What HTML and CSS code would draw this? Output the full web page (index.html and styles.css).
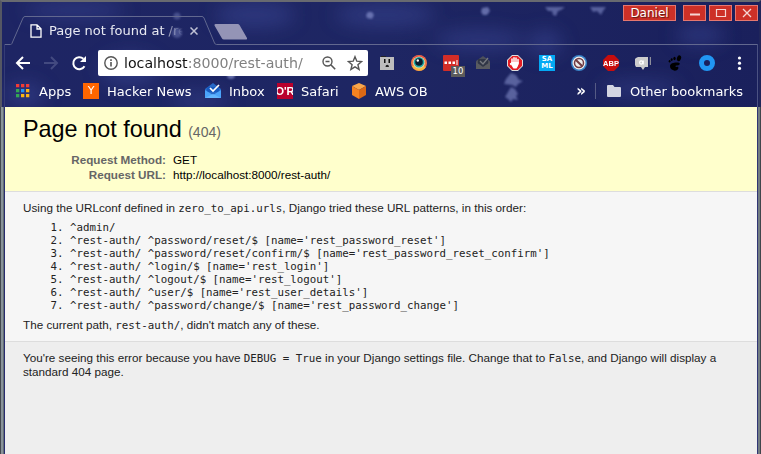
FILE: index.html
```html
<!DOCTYPE html>
<html lang="en">
<head>
<meta charset="utf-8">
<title>Page not found at /rest-auth/</title>
<link rel="stylesheet" href="styles.css">
</head>
<body>
<div class="window">
<header class="chrome">
<svg class="theme" width="761" height="107" viewBox="0 0 761 107" aria-hidden="true">
<defs>
<filter id="soft" x="-50%" y="-50%" width="200%" height="200%"><feGaussianBlur stdDeviation="9"/></filter>
<filter id="fuzz" x="-50%" y="-50%" width="200%" height="200%"><feGaussianBlur stdDeviation=".8"/></filter>
<linearGradient id="fade"><stop offset="0" stop-color="#1e2564"/><stop offset=".5" stop-color="#1e2663"/><stop offset="1" stop-color="#1a205c"/></linearGradient>
</defs>
<rect width="761" height="107" fill="url(#fade)"/>
<g filter="url(#soft)" fill="#35418a" opacity=".65"><ellipse cx="75" cy="10" rx="50" ry="9"/><ellipse cx="130" cy="70" rx="30" ry="16"/><ellipse cx="255" cy="15" rx="40" ry="13"/><ellipse cx="385" cy="15" rx="50" ry="12"/><ellipse cx="545" cy="43" rx="17" ry="13"/><ellipse cx="480" cy="40" rx="45" ry="10"/><ellipse cx="640" cy="88" rx="40" ry="7"/><ellipse cx="25" cy="95" rx="20" ry="12"/><ellipse cx="200" cy="100" rx="30" ry="8"/><ellipse cx="700" cy="35" rx="25" ry="10"/></g>
<g filter="url(#fuzz)" fill="#8b95d0" opacity=".65">
<circle cx="177" cy="33" r="5" opacity=".6"/><circle cx="177" cy="16" r="3.500" opacity=".6"/><path d="M368 12l4 0 2 3-2 4-5-1-1-3zM482 8l6-1 2 4-3 4-4 0-2-3z"/><path d="M545 7h20l-4 3-3 1-2 5-3-1-1-4-4 0zM590 7h16l-3 4-2 4-4-4-4 1zM511 73l5 2 3 5 4 1-5 3-2 3-4-2-8-1 2-5zM511 87l4 2 3 5-2 2 2 4-5-1-2 3-3-3-3-2 3-5z" opacity=".85"/><circle cx="231" cy="75" r="4"/></g>
<path d="M5 44.500h5.500q1 0 1.400-1L23 18q.6-1.500 2-1.500h177q1.400 0 2 1.500l10.500 25q.7 1.500 2 1.500H758" fill="none" stroke="#62688f"/>
<path d="M215.500 24h22q1.500 0 2 1l7.500 13q.5 1.500-1 1.500h-22q-1.500 0-2-1l-7.500-13q-.500-1.500 1-1.500z" fill="#9494b6"/>
</svg>
<div class="titlebar">
<div class="tab">
<svg class="file" width="12" height="14" viewBox="0 0 12 14"><path d="M1 .8h6l4 4v8.400H1zM7 .8v4.200h4" fill="none" stroke="#fff" stroke-width="1.300"/></svg>
<span class="tabtitle">Page not found at /re</span>
<svg width="8" height="8" viewBox="0 0 8 8"><path d="M.5.5l7 7m0-7l-7 7" stroke="#c0c2d5" stroke-width="1.500"/></svg>
</div>
<div class="controls"><span class="user">Daniel</span>
<span class="control"><svg width="14" height="10"><path d="M2 6.500h10" stroke="#f6d6d4" stroke-width="2"/></svg></span>
<span class="control"><svg width="14" height="10"><path d="M2.500 1.500h9v7h-9z" fill="none" stroke="#f6d6d4" stroke-width="1.200"/></svg></span>
<span class="control"><svg width="14" height="10"><path d="M3 1l8 8m0-8L3 9" stroke="#f6d6d4" stroke-width="1.300"/></svg></span>
</div>
</div>
<div class="toolbar">
<div class="nav">
<svg viewBox="0 0 16 16"><path d="M15 8H2m6-6L2 8l6 6" fill="none" stroke="#fff" stroke-width="2"/></svg>
<svg viewBox="0 0 16 16"><path d="M1 8h13M8 2l6 6-6 6" fill="none" stroke="#434a80" stroke-width="2"/></svg>
<svg viewBox="0 0 16 16"><path d="M13.500 11.200A6 6 0 1 1 12.400 3.800" fill="none" stroke="#fff" stroke-width="2"/><path d="M15 1v6H9z" fill="#fff"/></svg>
</div>
<div class="omnibox">
<svg width="14" height="14" viewBox="0 0 14 14"><circle cx="7" cy="7" r="6.200" fill="none" stroke="#555" stroke-width="1.400"/><path d="M7 6v4.500M7 3.200v1.700" stroke="#555" stroke-width="1.600"/></svg>
<span class="url">localhost<span>:8000/rest-auth/</span></span>
<svg class="glass" width="14" height="14" viewBox="0 0 14 14"><circle cx="5.500" cy="5.500" r="4.500" fill="none" stroke="#555" stroke-width="1.400"/><path d="M3.500 5.500h4M8.800 8.800l4.400 4.400" stroke="#555" stroke-width="1.600"/></svg>
<svg width="16" height="16" viewBox="0 0 16 16"><path d="M8 1.700l1.800 4.500 4.800.4-3.700 3.100 1.200 4.700L8 11.800l-4.100 2.600 1.200-4.700-3.700-3.100 4.800-.4z" fill="none" stroke="#555" stroke-width="1.400"/></svg>
</div>
<div class="extensions">
<span><svg viewBox="0 0 16 16"><path d="M2 1h5v1H2z" fill="#222"/><path d="M1 2h14v13H1z" fill="#bdbdbd"/><path d="M5 4h1.500v4H5zM9.500 4H11v4H9.500z" fill="#111"/><path d="M6.500 12q0-2.300 1.700-2.300T10 12z" fill="#222"/></svg></span>
<span><svg viewBox="0 0 16 16"><circle cx="8" cy="8" r="8" fill="#ef7845"/><path d="M1 11a8 8 0 0 0 14 1l-5-2z" fill="#f5b53f"/><path d="M2 3a8 8 0 0 1 12 0L8 7z" fill="#e84e46"/><circle cx="8" cy="7.500" r="6" fill="#f4d7a0"/><circle cx="8" cy="7.300" r="5.300" fill="#24a9a6"/><circle cx="8" cy="7" r="3.800" fill="#071b2c"/><circle cx="6.800" cy="5.500" r="1.200" fill="#fff"/></svg></span>
<span class="badged"><svg viewBox="0 0 16 16"><rect width="16" height="16" rx="1" fill="#d32d27"/><path d="M1.500 6.500h2.500V9H1.500zM5.500 6.500H8V9H5.500zM9.500 6.500H12V9H9.500zM13.500 5h1v5h-1z" fill="#fff"/></svg><b class="badge">10</b></span>
<span><svg viewBox="0 0 16 16"><path d="M1 6l7-5 7 5v8H1z" fill="#4c4f5b"/><path d="M3 4h10v5l-5 3-5-3z" fill="#303646"/><path d="M5 6l3 3 5-6" fill="none" stroke="#777a80" stroke-width="1.400"/><path d="M1 7l7 5 7-5v7H1z" fill="#595b60"/></svg></span>
<span><svg viewBox="0 0 16 16"><path d="M5 0h6l5 5v6l-5 5H5l-5-5V5z" fill="#ddd"/><path d="M5.300 1h5.400L15 5.300v5.400L10.700 15H5.300L1 10.700V5.300z" fill="#e51c23"/><path d="M5 9V4M7 8V2.800M9 8V3M11 9V4.500" stroke="#fff" stroke-width="1.500" stroke-linecap="round"/><path d="M4.200 7h7.500l-.7 4-1.500 2.500H6.500L4.200 10z" fill="#fff"/><path d="M4 10L3.500 8" stroke="#fff" stroke-width="1.400"/></svg></span>
<span class="saml">SA<br>ML</span>
<span><svg viewBox="0 0 16 16"><circle cx="8" cy="8" r="8" fill="#3984c8"/><circle cx="8" cy="8" r="6.500" fill="#f4eeee"/><circle cx="8" cy="8" r="4.500" fill="#eee" stroke="#713c43" stroke-width="1.500"/><path d="M4.700 4.700l6.600 6.600" stroke="#713c43" stroke-width="2"/></svg></span>
<span><svg viewBox="0 0 16 16"><path d="M5 0h6l5 5v6l-5 5H5l-5-5V5z" fill="#c70d0d"/><text class="abp" x="8" y="10.600" text-anchor="middle">ABP</text></svg></span>
<span><svg viewBox="0 0 16 16"><path d="M1 3l2-1h10v10h-3l-2 3-2-3H1l-1-2V4z" fill="#ccc"/><path d="M15.300 2v8" stroke="#aaa"/><circle cx="6.200" cy="7.500" r="1.600" fill="none" stroke="#fff" stroke-width="1.200"/><path d="M8.300 5.500v4" stroke="#fff"/></svg></span>
<span><svg viewBox="0 0 16 16"><ellipse cx="12" cy="3.300" rx="2" ry="3" transform="rotate(20 12 3.300)"/><ellipse cx="7.500" cy="3.500" rx="1.200" ry="1.700"/><ellipse cx="4.700" cy="4.600" rx="1" ry="1.400"/><ellipse cx="2.600" cy="6.300" rx=".9" ry="1.200"/><path d="M3 11c0-3 5-4 8-3.500 3 .5 2 3-1 3-2 0-2 1-.5 1.600 1.500-1 2.500 0 1.500 2-1 2-4 2-5 1C4 14.500 3 13 3 11z"/></svg></span>
<span><svg viewBox="0 0 16 16"><circle cx="8" cy="8" r="5.500" fill="none" stroke="#2196f3" stroke-width="5"/></svg></span>
<span><svg viewBox="0 0 16 16"><g fill="#fff"><circle cx="8.500" cy="3" r="1.600"/><circle cx="8.500" cy="8.200" r="1.600"/><circle cx="8.500" cy="13.400" r="1.600"/></g></svg></span>
</div>
</div>
<nav class="bookmarks">
<span class="bm apps"><svg width="14" height="14" viewBox="0 0 14 14"><path d="M0 0h3.300v3.300H0zM5 0h3.300v3.300H5zM10 0h3.300v3.300H10z" fill="#f23b36"/><path d="M0 5h3.300v3.300H0z" fill="#34a853"/><path d="M5 5h3.300v3.300H5z" fill="#2196f3"/><path d="M10 5h3.300v3.300H10zM10 10h3.300v3.300H10zM5 10h3.300v3.300H5z" fill="#fbb614"/><path d="M0 10h3.300v3.300H0z" fill="#34a853"/></svg>Apps</span>
<span class="bm hacker"><b class="yc">Y</b>Hacker News</span>
<span class="bm inbox"><svg width="16" height="16" viewBox="0 0 16 16"><path d="M0 6l8-6 8 6v8H0z" fill="#2769c7"/><path d="M2 4h12v5H2z" fill="#175bc0"/><path d="M0 7l8 5 8-5v8H0z" fill="#4ba4fa"/><path d="M0 15l8-4 8 4z" fill="#63b6ff"/><path d="M5 5l3 3 6-6" fill="none" stroke="#fff" stroke-width="1.700"/></svg>Inbox</span>
<span class="bm safari"><b class="oreilly"><i>O'R</i></b>Safari</span>
<span class="bm aws"><svg width="16" height="16" viewBox="0 0 16 16"><path d="M8 0l7 3-7 4-7-4z" fill="#f9a64a"/><path d="M1 3l7 4v9l-7-4z" fill="#f58220"/><path d="M15 3L8 7v9l7-4z" fill="#dc6815"/></svg>AWS OB</span>
<span class="more">»</span>
<span class="bm other"><svg width="14" height="12" viewBox="0 0 14 12"><path d="M1 0h5l1.500 2H13q1 0 1 1v8q0 1-1 1H1q-1 0-1-1V1q0-1 1-1z" fill="#d3d5e2"/></svg>Other bookmarks</span>
</nav>
</header>
<main class="page">
<section class="summary">
<h1>Page not found <span>(404)</span></h1>
<table><tr><th>Request Method:</th><td>GET</td></tr><tr><th>Request URL:</th><td>http://localhost:8000/rest-auth/</td></tr></table>
</section>
<section class="info">
<p>Using the URLconf defined in <code>zero_to_api.urls</code>, Django tried these URL patterns, in this order:</p>
<ol>
<li>^admin/</li>
<li>^rest-auth/ ^password/reset/$ [name='rest_password_reset']</li>
<li>^rest-auth/ ^password/reset/confirm/$ [name='rest_password_reset_confirm']</li>
<li>^rest-auth/ ^login/$ [name='rest_login']</li>
<li>^rest-auth/ ^logout/$ [name='rest_logout']</li>
<li>^rest-auth/ ^user/$ [name='rest_user_details']</li>
<li>^rest-auth/ ^password/change/$ [name='rest_password_change']</li>
</ol>
<p>The current path, <code>rest-auth/</code>, didn't match any of these.</p>
</section>
<section class="explanation"><p>You're seeing this error because you have <code>DEBUG = True</code> in your Django settings file. Change that to <code>False</code>, and Django will display a standard 404 page.</p></section>
</main>
</div>
</body>
</html>
```

FILE: styles.css
```css
* { box-sizing: border-box; margin: 0; padding: 0; }
body { width: 761px; height: 454px; overflow: hidden; background: #222a64; }
.window { height: 454px; }
svg { display: block; flex: none; }
.chrome { position: relative; height: 107px; border-top: 2px solid #686a70; border-left: 2px solid #555763; border-right: 2px solid #20265a; color: #fff; font-family: "DejaVu Sans", sans-serif; }
.theme { position: absolute; top: -2px; left: -2px; clip-path: inset(2px 2px 0 2px); }
.chrome::after { content: ""; position: absolute; left: 2px; right: 1px; top: 42px; bottom: 0; border-left: 1px solid #353c75; border-right: 1px solid #4b5282; }
.titlebar, .toolbar, .bookmarks { position: relative; display: flex; z-index: 1; }
.titlebar { height: 44px; justify-content: space-between; }
.tab { display: flex; align-items: center; height: 28px; margin: 15px 0 0 28px; }
.tabtitle { width: 136px; margin-left: 7px; margin-right: 5px; overflow: hidden; white-space: nowrap; font-size: 13px; line-height: 18px; color: #e8e9f2; mask-image: linear-gradient(90deg, #000 112px, transparent 134px); }
.controls { display: flex; height: 17px; margin: 3px 1px 0 0; }
.user, .control { display: flex; align-items: center; justify-content: center; height: 16px; border: 1px solid #e47770; background: #cd3027; }
.user { width: 53px; margin-right: 7px; font-size: 12px; line-height: 14px; text-shadow: 1px 1px 1px #5b1916; }
.control { width: 23px; margin-right: 3px; }
.control:last-child { margin-right: 0; }
.toolbar { height: 34px; align-items: center; }
.nav { display: flex; gap: 12px; margin-left: 13px; width: 83px; }
.nav svg { width: 16px; height: 16px; }
.omnibox { display: flex; align-items: center; width: 270px; height: 26px; padding: 0 5px 0 6px; border-radius: 2px; background: #fff; margin-right: 3px; }
.url { flex: 1; margin-left: 6px; color: #111; font-size: 14.2px; white-space: nowrap; }
.url span { color: #808080; }
.glass { margin-right: 11px; }
.extensions { display: grid; grid-template-columns: repeat(12, 32px); }
.extensions > span { display: block; width: 16px; height: 16px; justify-self: center; }
.extensions svg { width: 16px; height: 16px; }
.badged { position: relative; }
.badge { position: absolute; left: 8px; top: 11px; width: 14px; height: 11px; background: #5b5b5b; font: 8.5px/11px "DejaVu Sans", sans-serif; text-align: center; }
.saml { background: #03a9f4; font: bold 7px/7px "DejaVu Sans", sans-serif; text-align: center; padding-top: 1px; }
.abp { font: bold 7.5px "Liberation Sans", sans-serif; fill: #fff; }
.bookmarks { height: 26px; align-items: center; font-size: 13px; padding-left: 14px; margin-top: -2px; }
.bm { display: flex; align-items: center; height: 20px; white-space: nowrap; }
.apps { width: 67px; gap: 9px; }
.hacker { width: 122px; gap: 8px; }
.inbox { width: 72px; gap: 8px; }
.safari { width: 74px; gap: 8px; }
.aws { gap: 8px; }
.yc, .oreilly { display: block; width: 16px; height: 16px; }
.yc { background: #f60; font: 11px/16px "DejaVu Sans", sans-serif; text-align: center; }
.oreilly { display: flex; justify-content: center; overflow: hidden; background: #b9002d; font: bold 11px/16px "Liberation Sans", sans-serif; }
.oreilly i { font-style: normal; flex: none; }
.more { margin-left: auto; font-size: 15px; font-weight: bold; }
.other { gap: 9px; margin-left: 9px; padding-left: 11px; margin-right: 16px; height: 16px; border-left: 1px solid #555b85; }
.page { height: 347px; border-left: 5px solid; border-right: 4px solid; border-image: linear-gradient(90deg, #444950 1px, #89939a 1px 3px, #626e74 3px 4px, #282b70 4px 757px, #303575 757px 758px, #727d82 758px 760px, #40454b 760px) 0 4 0 5; background: #eee; font: 11.7px/14px "Liberation Sans", Arial, sans-serif; color: #000; }
.summary { height: 85px; padding: 9px 18px; background: #ffc; border-bottom: 1px solid #ddd; }
h1 { height: 27px; margin-bottom: 9px; font-size: 23.4px; font-weight: normal; line-height: 27px; }
h1 span { font-size: 14.04px; color: #666; }
table { border-collapse: collapse; }
th { width: 147px; padding-right: 4px; text-align: right; color: #666; }
td, th { height: 15px; line-height: 15px; }
td { padding-left: 3px; }
code, ol { font-family: "DejaVu Sans Mono", monospace; font-size: 10.8px; }
code { line-height: 1; }
.info { height: 150px; padding: 9px 18px; background: #f6f6f6; border-bottom: 1px solid #ddd; color: #222; }
ol { margin: 6px 0 6px 47px; line-height: 13px; font-size: 10.78px; }
li { height: 13px; white-space: pre; }
.explanation { padding: 9px 18px; color: #222; }
```
